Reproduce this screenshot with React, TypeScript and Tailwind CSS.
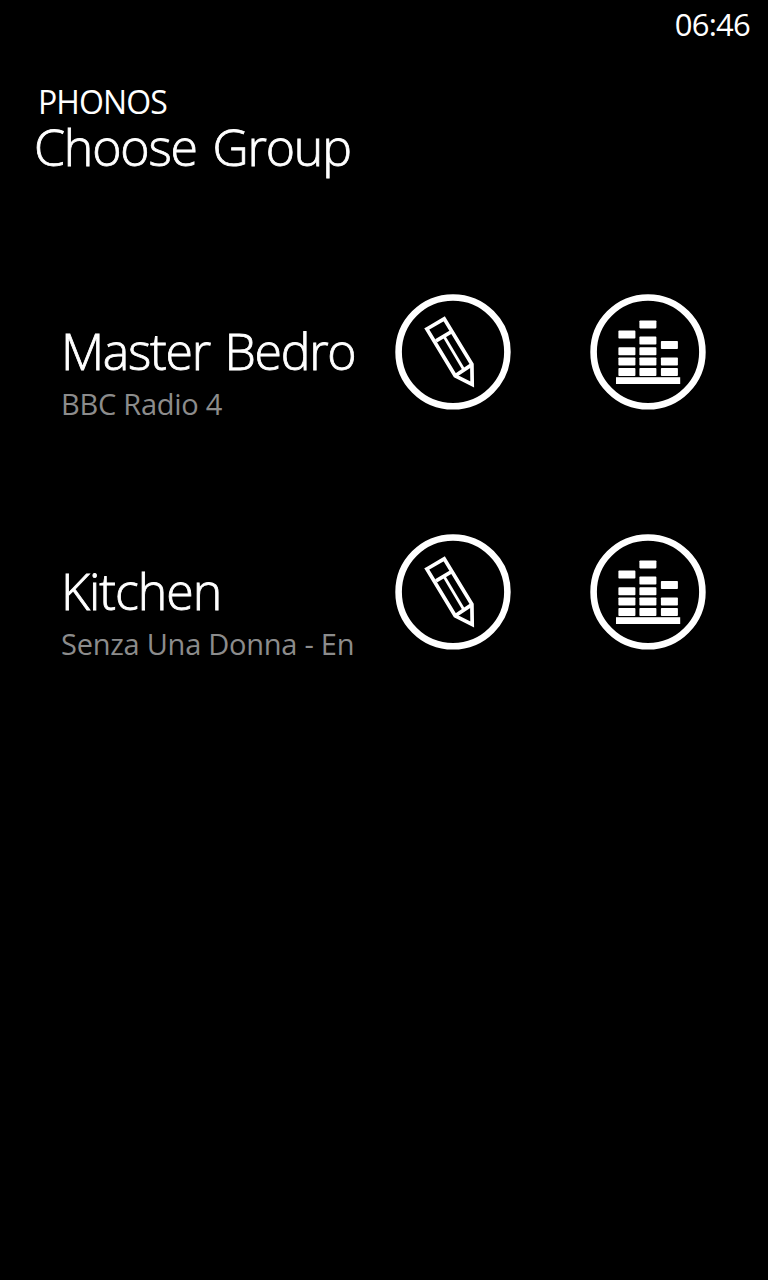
import React from 'react';

const groups = [{
  name: 'Master Bedro',
  playing: 'BBC Radio 4',
  nameClass: 'tracking-[-1.3px] [word-spacing:3px]',
  playingClass: 'tracking-[-0.25px]'
}, {
  name: 'Kitchen',
  playing: 'Senza Una Donna - En',
  nameClass: 'tracking-[-1px]',
  playingClass: 'tracking-[-0.25px]'
}];

// x, y of each equalizer segment
const segments = [[28.4, 36.6], [28.4, 53.2], [28.4, 63.5], [28.4, 74], [49.4, 26.4], [49.4, 42.6], [49.4, 53.2], [49.4, 63.5], [49.4, 74], [70.9, 47], [70.9, 63.5], [70.9, 74]];

const PencilIcon = () => <svg viewBox="0 0 116 116" className="size-[116px]" fill="none" stroke="white">
    <circle cx="58" cy="57.9" r="54.4" strokeWidth="6.6" />
    <g strokeWidth="3.7">
      <path d="M31.8 35 L49.2 24.8 L76.9 70.4 L77.2 90.4 L60.2 81.8 Z" />
      <path d="M41 46.8 L57 37.4 M60.2 81.8 L76.9 70.6" />
      <path d="M49.2 42.8 L69 76" strokeWidth="2.8" />
    </g>
  </svg>;

const EqualizerIcon = () => <svg viewBox="0 0 116 116" className="size-[116px]" fill="white">
    <circle cx="58" cy="57.9" r="54.4" strokeWidth="6.6" fill="none" stroke="white" />
    {segments.map(([x, y]) => <rect key={`${x}-${y}`} x={x} y={y} width="17" height="8" rx="0.8" />)}
    <rect x="26" y="83.2" width="64.2" height="6.8" />
  </svg>;

const App = () => {
  return <div className="w-[768px] h-[1280px] overflow-hidden bg-black text-white font-['Open_Sans','Noto_Sans',sans-serif] whitespace-nowrap">
      {/* Status bar */}
      <div className="flex h-[50px] justify-end pr-[18px] text-[31px] leading-[48px] tracking-[-0.75px]">
        <span>06:46</span>
      </div>

      {/* Page title */}
      <header className="flex h-[220px] flex-col items-start pt-[32px]">
        <p className="pl-[38px] text-[32px] leading-[40px] tracking-[-0.9px]">PHONOS</p>
        <h1 className="pl-[34px] text-[50px] font-light leading-[51px] tracking-[-1.2px] [word-spacing:4px] [-webkit-text-stroke:0.8px_white]">Choose Group</h1>
      </header>

      <ul>
        {groups.map(group => <li key={group.name} className="flex h-60 items-start pt-6 pl-[61px]">
            <div className="w-[334px] shrink-0 pt-[24px]">
              <div className={`text-[50px] font-light leading-[66px] [-webkit-text-stroke:0.8px_white] ${group.nameClass}`}>{group.name}</div>
              <div className={`text-[29px] leading-10 text-[#8c8c8c] ${group.playingClass}`}>{group.playing}</div>
            </div>
            <div className="flex gap-[79px]">
              <button aria-label="Edit group"><PencilIcon /></button>
              <button aria-label="Volume"><EqualizerIcon /></button>
            </div>
          </li>)}
      </ul>
    </div>;
};
export default App;
